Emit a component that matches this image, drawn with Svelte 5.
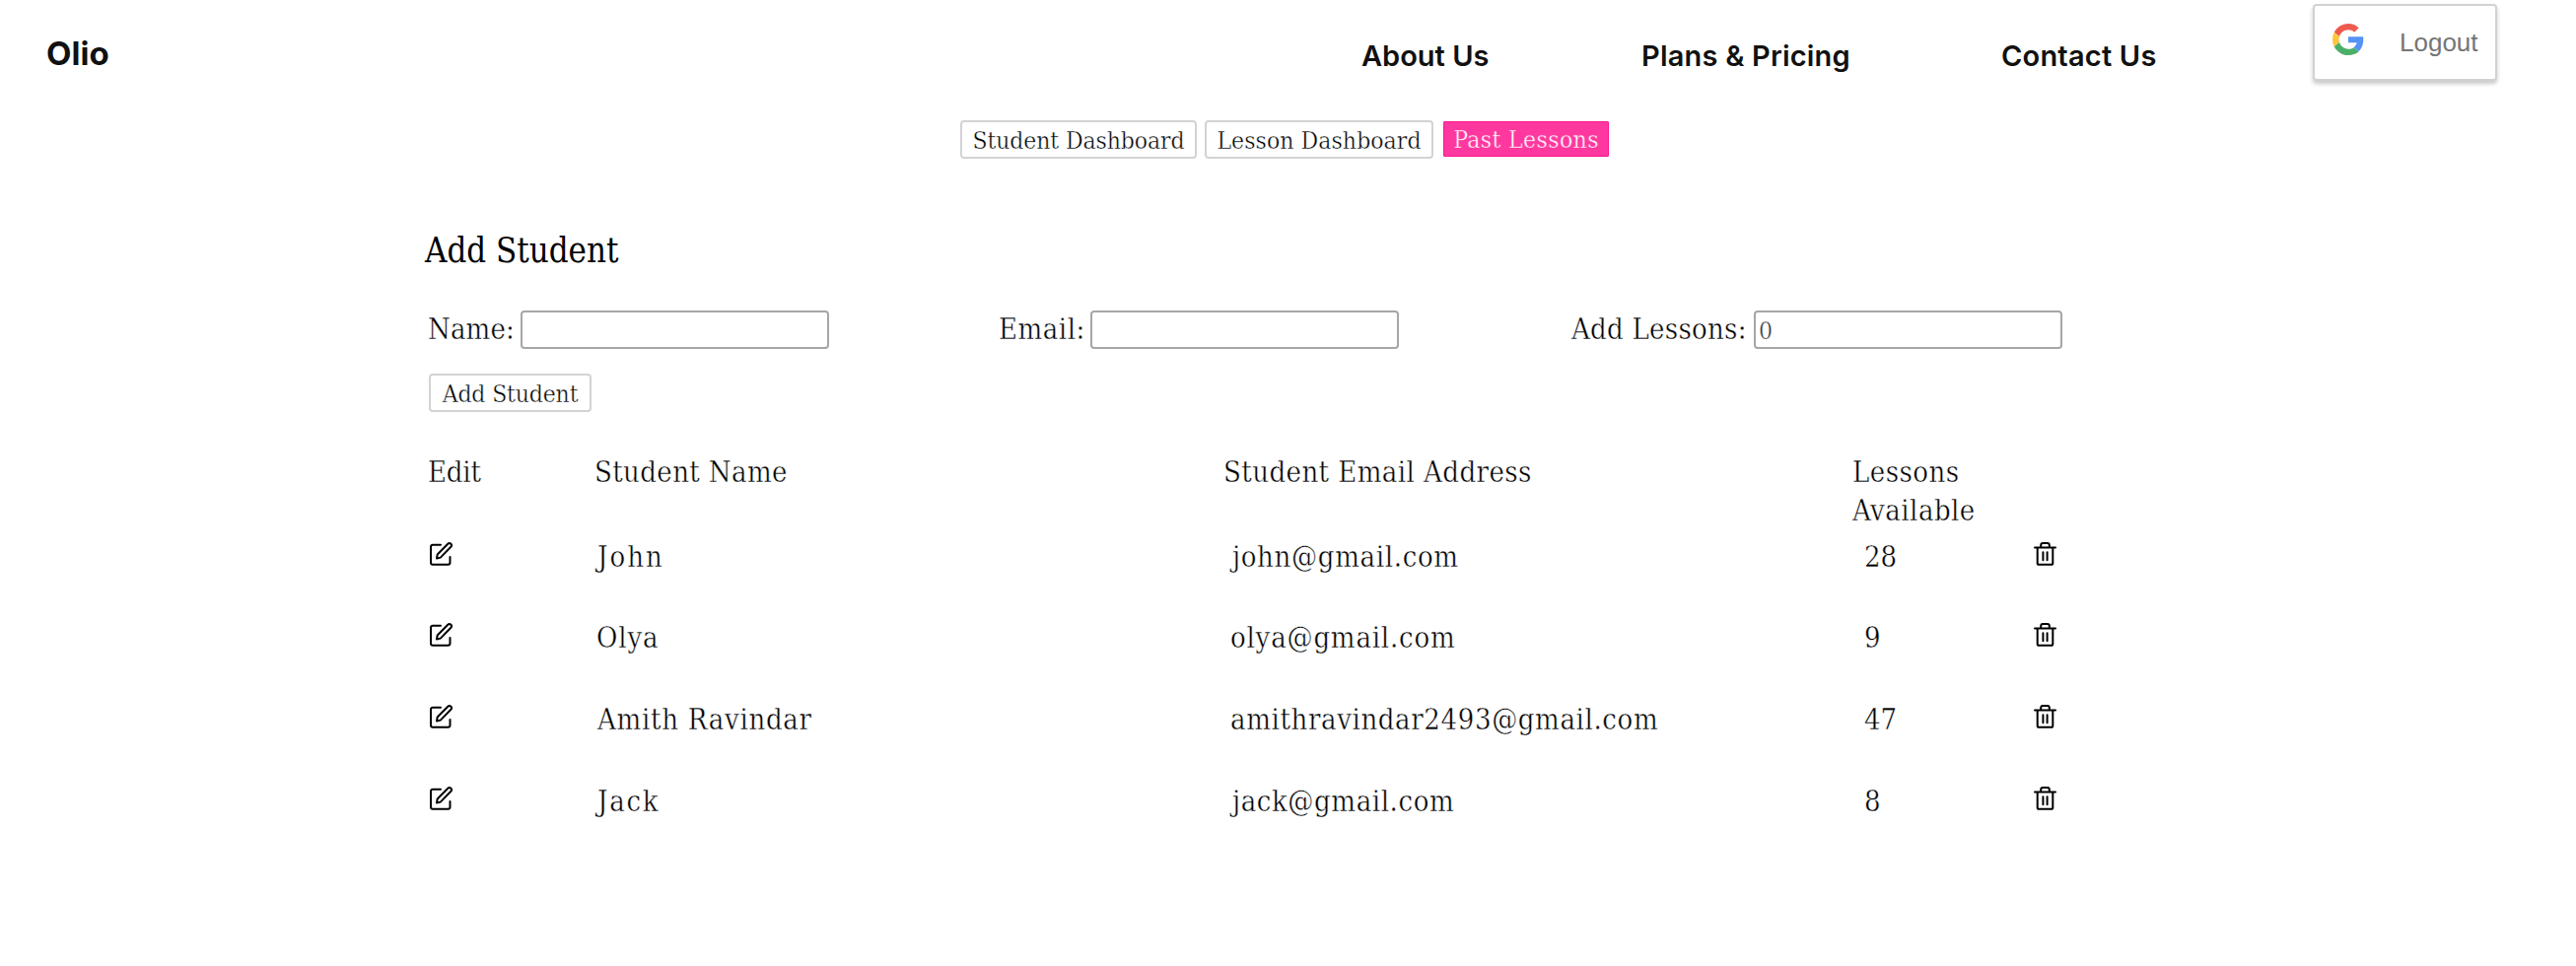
<script>
  const links = [
    { label: 'About Us', ls: 0, width: 285 },
    { label: 'Plans & Pricing', ls: 0.2, width: 366 },
    { label: 'Contact Us', ls: 0.2, width: 158 },
  ];
  const students = [
    { name: 'John', nameLs: 2, nameX: 3, email: 'john@gmail.com', emailLs: 0.66, emailX: 3, lessons: 28 },
    { name: 'Olya', nameLs: 0.84, nameX: 2, email: 'olya@gmail.com', emailLs: 0.79, emailX: 1, lessons: 9 },
    { name: 'Amith Ravindar', nameLs: 0.7, nameX: 3, email: 'amithravindar2493@gmail.com', emailLs: 0.6, emailX: 1, lessons: 47 },
    { name: 'Jack', nameLs: 1.7, nameX: 3, email: 'jack@gmail.com', emailLs: 0.58, emailX: 3, lessons: 8 },
  ];
</script>

<div class="page">
  <header>
    <span class="brand">Olio</span>
    <nav>
      {#each links as l}
        <span class="link" style:width="{l.width}px" style:letter-spacing="{l.ls}px">{l.label}</span>
      {/each}
    </nav>
    <button class="logout">
      <svg width="32" height="32" viewBox="0 0 48 48">
        <path fill="#ee5a4e" d="M24 9.5c3.54 0 6.71 1.22 9.21 3.6l6.85-6.85C35.9 2.38 30.47 0 24 0 14.62 0 6.51 5.38 2.56 13.22l7.98 6.19C12.43 13.72 17.74 9.5 24 9.5z" />
        <path fill="#5593f5" d="M46.98 24.55c0-1.57-.15-3.09-.38-4.55H24v9.02h12.94c-.58 2.96-2.26 5.48-4.78 7.18l7.73 6c4.51-4.18 7.09-10.36 7.09-17.65z" />
        <path fill="#ffc540" d="M10.53 28.59c-.48-1.45-.76-2.99-.76-4.59s.27-3.14.76-4.59l-7.98-6.19C.92 16.46 0 20.12 0 24c0 3.88.92 7.54 2.56 10.78l7.97-6.19z" />
        <path fill="#4caf68" d="M24 48c6.48 0 11.93-2.13 15.89-5.81l-7.73-6c-2.15 1.45-4.92 2.3-8.16 2.3-6.26 0-11.57-4.22-13.47-9.91l-7.98 6.19C6.51 42.62 14.62 48 24 48z" />
      </svg>
      <span>Logout</span>
    </button>
  </header>

  <div class="tabs">
    <button class="btn tab student">Student Dashboard</button>
    <button class="btn tab lesson">Lesson Dashboard</button>
    <button class="btn tab active">Past Lessons</button>
  </div>

  <main>
    <h2>Add Student</h2>
    <form>
      <label class="name"><span>Name:</span><input type="text" /></label>
      <label class="email"><span>Email:</span><input type="text" /></label>
      <label class="count"><span>Add Lessons:</span><input type="text" value="0" /></label>
    </form>
    <button class="btn add">Add Student</button>

    <div class="row head">
      <span class="edit">Edit</span>
      <span class="sname">Student Name</span>
      <span class="smail">Student Email Address</span>
      <span class="avail">Lessons Available</span>
    </div>
    {#each students as s}
      <div class="row">
        <svg class="icon" width="26" height="26" viewBox="0 0 26 26">
          <path d="M12 3.7H4a2 2 0 0 0-2 2v16a2 2 0 0 0 2 2h15.5a2 2 0 0 0 2-2V16" />
          <path d="M8 17.5l.7-4L19.3 2.8a2.1 2.1 0 0 1 3.1 3L11.8 16.6z" />
        </svg>
        <span style:padding-left="{s.nameX}px" style:letter-spacing="{s.nameLs}px">{s.name}</span>
        <span class="mail" style:padding-left="{s.emailX}px" style:letter-spacing="{s.emailLs}px">{s.email}</span>
        <span class="num">{s.lessons}</span>
        <svg class="icon" width="24" height="26" viewBox="0 0 24 26">
          <path d="M1 6.5h21M3.7 6.5v15.7a1.6 1.6 0 0 0 1.6 1.6h12.4a1.6 1.6 0 0 0 1.6-1.6V6.5M7.2 6V4a2 2 0 0 1 2-2h4.6a2 2 0 0 1 2 2v2M9.4 11.3v8M13.6 11.3v8" />
        </svg>
      </div>
    {/each}
  </main>
</div>

<style>
  :global(body) { background: #fff; }
  .page {
    width: 2613px;
    height: 980px;
    overflow: hidden;
    color: #000;
    font-family: 'DejaVu Serif Condensed', 'DejaVu Serif', serif;
    font-size: 29px;
    line-height: 39px;
    -webkit-text-stroke: 0.4px #fff;
  }
  button, input {
    box-sizing: border-box;
    margin: 0;
    font-family: inherit;
    background: #fff;
  }
  header {
    display: flex;
    align-items: flex-start;
    height: 122px;
    padding-left: 47px;
    box-sizing: border-box;
    color: #111;
    font-family: Inter, sans-serif;
    -webkit-text-stroke: 0;
  }
  .brand {
    width: 1334px;
    margin-top: 34px;
    font-size: 33px;
    line-height: 40px;
    font-weight: 700;
    letter-spacing: 0.1px;
  }
  nav { display: flex; width: 965px; margin-top: 37px; }
  .link { font-size: 29px; line-height: 40px; font-weight: 600; margin-left: -1px; white-space: nowrap; }
  .link:first-child { margin-left: 0; }
  .logout {
    display: flex;
    align-items: flex-start;
    gap: 36px;
    width: 187px;
    height: 78px;
    margin-top: 4px;
    padding: 18px 0 0 18px;
    border: 2px solid #d2d2d2;
    border-radius: 4px;
    box-shadow: 0 3px 4px rgba(0, 0, 0, 0.22);
    color: #757575;
    font: 26px/38px 'Liberation Sans', sans-serif;
  }
  .tabs { display: flex; align-items: flex-start; padding-left: 974px; height: 110px; }
  .btn {
    height: 39px;
    padding: 2px 0 0;
    border: 2px solid #d3d3d3;
    border-radius: 4px;
    color: #000;
    font-size: 24.5px;
    line-height: 34px;
    white-space: nowrap;
    -webkit-text-stroke: 0.4px #fff;
  }
  .student { width: 240px; letter-spacing: -0.11px; }
  .lesson { width: 232px; margin-left: 8px; letter-spacing: 0.06px; }
  .active {
    width: 168px;
    height: 36px;
    margin: 1px 0 0 10px;
    padding-top: 1px;
    border: 1px solid #ff1493;
    border-radius: 1px;
    background: #ff389f;
    color: #fff;
    line-height: 34px;
    letter-spacing: 0.38px;
    -webkit-text-stroke: 0.4px #ff389f;
  }
  main { padding-left: 434px; }
  h2 {
    margin: 0;
    padding-bottom: 39px;
    margin-left: -3px;
    font-size: 34.5px;
    line-height: 44px;
    font-weight: 400;
    -webkit-text-stroke: 0;
  }
  form { display: flex; height: 64px; }
  label { display: flex; align-items: flex-start; }
  label span { flex: none; }
  input {
    width: 313px;
    height: 39px;
    padding: 2px 3px 0;
    border: 2px solid #a6a6a6;
    border-radius: 4px;
    color: #333;
    font-size: 24.5px;
  }
  .name { width: 579px; letter-spacing: 0.11px; }
  .name span { width: 94px; }
  .email { width: 581px; letter-spacing: 0.5px; }
  .email span { width: 93px; }
  .count { letter-spacing: 0.25px; }
  .count span { width: 185px; }
  .add { display: block; width: 165px; margin-left: 1px; letter-spacing: -0.16px; padding-top: 2px; }
  .row {
    display: grid;
    grid-template-columns: 169px 644px 636px 181px 24px;
    height: 82.7px;
    padding-top: 7.5px;
    box-sizing: border-box;
    white-space: nowrap;
  }
  .head { grid-template-columns: 169px 638px 638px 160px; height: 78px; padding: 0; margin-top: 42px; }
  .edit { letter-spacing: -0.2px; }
  .sname { letter-spacing: 0.37px; }
  .smail { letter-spacing: 0.42px; }
  .avail { letter-spacing: 0.45px; white-space: normal; }
  .num { padding-left: 8px; }
  .icon {
    margin: 3px 0 0 1px;
    fill: none;
    stroke: #000;
    stroke-width: 2;
    stroke-linecap: round;
    stroke-linejoin: round;
  }
  .icon:last-child { margin-left: -1px; }
</style>
